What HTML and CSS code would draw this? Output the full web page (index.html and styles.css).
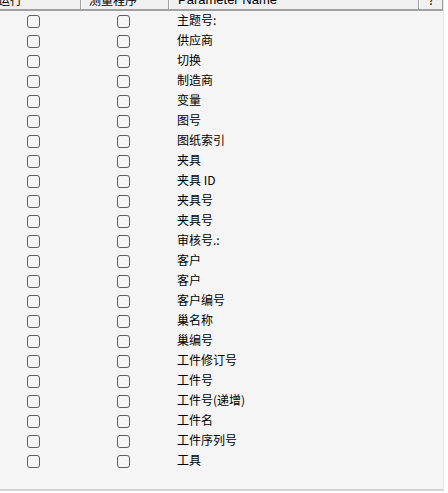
FILE: index.html
```html
<!DOCTYPE html>
<html lang="zh-CN">
<head>
  <meta charset="UTF-8" />
  <title>Parameters</title>
  <link rel="stylesheet" href="styles.css">
</head>
<body>
  <div class="panel">
    <div class="grid-head">
      <div class="hcell first">运行</div>
      <div class="hcell">测量程序</div>
      <div class="hcell name">Parameter Name</div>
      <div class="hcell help">?</div>
    </div>

    <div class="rows" id="rows"></div>
  </div>

  <script>
    const names = [
      "主题号:", "供应商", "切换", "制造商", "变量", "图号", "图纸索引",
      "夹具", "夹具 ID", "夹具号", "夹具号", "审核号.:", "客户", "客户",
      "客户编号", "巢名称", "巢编号", "工件修订号", "工件号", "工件号(递增)",
      "工件名", "工件序列号", "工具"
    ];
    const rows = document.getElementById("rows");

    names.forEach(name => {
      const row = document.createElement("div");
      row.className = "row";
      row.innerHTML = `
        <div class="cell run"><span class="box"></span></div>
        <div class="cell prog"><span class="box"></span></div>
        <div class="cell label">${name}</div>
      `;
      rows.appendChild(row);
    });
  </script>
</body>
</html>
```

FILE: styles.css
```css
body {
  margin: 0;
  background-color: #ffffff;
  font-family: "Microsoft YaHei", "Noto Sans CJK SC", sans-serif;
  font-size: 12px;
  color: #000;
}

.panel {
  width: 443px;
  height: 489px;
  background-color: #f5f5f5;
  border-right: 1px solid #e4e4e4;
  border-bottom: 2px solid #d4d4d4;
  overflow: hidden;
}

.grid-head {
  display: grid;
  grid-template-columns: 81px 88px 250px 24px;
  height: 19px;
  margin-top: -10px;
  border-bottom: 2px solid #a0a0a0;
  background-color: #f0f0f0;
}

.hcell {
  padding-left: 7px;
  line-height: 19px;
  border-right: 1px solid #a0a0a0;
  border-left: 1px solid #ffffff;
  white-space: nowrap;
  overflow: hidden;
}

.hcell.first {
  padding-left: 0;
  text-indent: -2px;
  border-left: none;
}

.hcell.name {
  padding-left: 8px;
  font-family: "Liberation Sans", Arial, sans-serif;
  font-size: 13px;
}

.hcell.help {
  text-align: center;
  padding-left: 0;
}

.row {
  display: grid;
  grid-template-columns: 81px 88px 1fr;
  height: 20px;
  align-items: center;
}

.cell.run {
  padding-left: 27px;
}

.cell.prog {
  padding-left: 36px;
}

.cell.label {
  padding-left: 8px;
  line-height: 16px;
  margin-top: -2px;
  white-space: nowrap;
}

.box {
  display: block;
  width: 11px;
  height: 11px;
  border: 1px solid #5f5f5f;
  border-radius: 3px;
  background-color: #f5f5f5;
}
```
